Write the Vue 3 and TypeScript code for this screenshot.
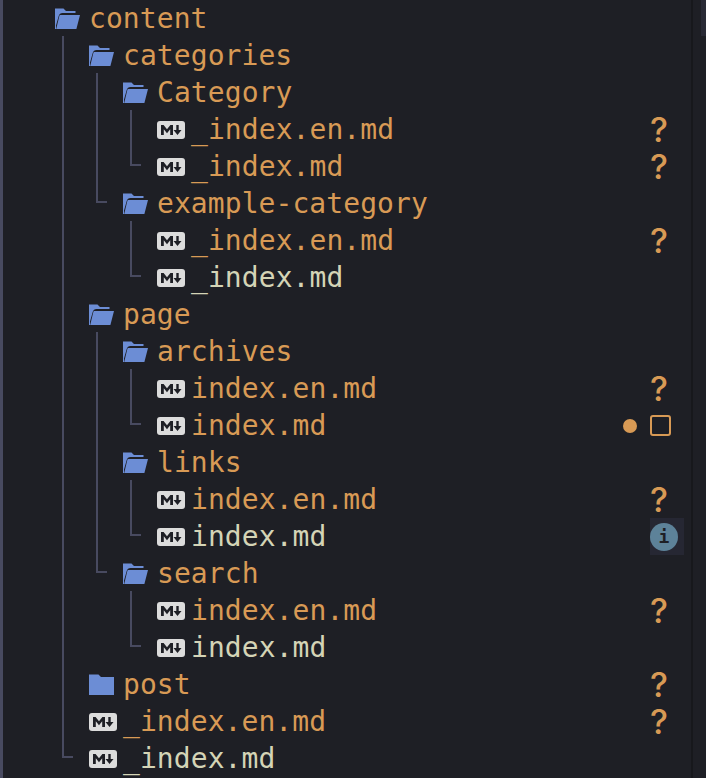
<script setup lang="ts">
type Mark = 'new' | 'stop' | 'info' | null;

interface Node {
  name: string;
  kind: 'open' | 'closed' | 'md';
  changed?: boolean;
  mark?: Mark;
  children?: Node[];
}

const ROW = 37;
const INDENT = 34;

const md = (name: string, changed = true, mark: Mark = 'new'): Node => ({ name, kind: 'md', changed, mark });
const dir = (name: string, children: Node[]): Node => ({ name, kind: 'open', changed: true, children });

const tree: Node[] = [
  dir('content', [
    dir('categories', [
      dir('Category', [md('_index.en.md'), md('_index.md')]),
      dir('example-category', [md('_index.en.md'), md('_index.md', false, null)]),
    ]),
    dir('page', [
      dir('archives', [md('index.en.md'), md('index.md', true, 'stop')]),
      dir('links', [md('index.en.md'), md('index.md', false, 'info')]),
      dir('search', [md('index.en.md'), md('index.md', false, null)]),
    ]),
    { name: 'post', kind: 'closed', changed: true, mark: 'new' },
    md('_index.en.md'),
    md('_index.md', false, null),
  ]),
];

const rows: Array<Node & { depth: number }> = [];
const guides: Array<{ left: number; top: number; height: number }> = [];

function walk(nodes: Node[], depth: number) {
  for (const node of nodes) {
    const at = rows.length;
    rows.push({ ...node, depth });
    if (!node.children) continue;
    let last = at;
    for (const child of node.children) {
      last = rows.length;
      walk([child], depth + 1);
    }
    guides.push({
      left: depth * INDENT + 59,
      top: (at + 1) * ROW - 1,
      height: (last - at) * ROW - 20,
    });
  }
}
walk(tree, 0);
</script>

<template>
  <div class="ide">
    <div class="tree">
      <div
        v-for="(g, i) in guides"
        :key="i"
        class="guide"
        :style="{ left: g.left + 'px', top: g.top + 'px', height: g.height + 'px' }"
      ></div>

      <div
        v-for="(row, i) in rows"
        :key="i"
        class="row"
        :style="{ paddingLeft: 52 + row.depth * INDENT + 'px' }"
      >
        <span class="icon">
          <svg v-if="row.kind === 'open'" width="25" height="21" viewBox="0 0 25 21">
            <path d="M0 .5h8.500l2.500 2.500h9.500v2H7.500q-3 0-3.800 3L1 17.500V21H0z" fill="#6c8dd5" />
            <path d="M5.200 7h19.800l-3.600 14H1.200l3-12.600q.3-1.400 1-1.400z" fill="#6c8dd5" />
          </svg>
          <svg v-else-if="row.kind === 'closed'" width="25" height="21" viewBox="0 0 25 21">
            <path d="M0 .5h9.500l2.500 2.500H25v18H0z" fill="#6c8dd5" />
          </svg>
          <svg v-else class="md" width="28" height="18" viewBox="0 0 28 18">
            <rect width="28" height="18" rx="3" fill="#dcdcdc" />
            <path d="M4 14V4h2.600L10 8.200 13.400 4H16v10h-2.800V8.300L10 12.200 6.800 8.300V14z" fill="#1e1f25" />
            <path d="M19.300 4h2.400v5H24.500l-4 5-4-5h2.800z" fill="#1e1f25" />
          </svg>
        </span>
        <span class="name" :class="{ changed: row.changed }">{{ row.name }}</span>
        <span v-if="row.mark" class="marks">
          <template v-if="row.mark === 'stop'">
            <i class="dot"></i>
            <span class="slot"><i class="square"></i></span>
          </template>
          <span v-else-if="row.mark === 'new'" class="slot question">?</span>
          <span v-else class="slot">
            <span class="info-hover"><span class="info">i</span></span>
          </span>
        </span>
      </div>
    </div>
    <div class="gutter"><div class="thumb"></div></div>
  </div>
</template>

<style scoped>
.ide {
  display: flex;
  width: 706px;
  height: 778px;
  overflow: hidden;
  background: #1e1f25;
  font-family: "DejaVu Sans Mono", "Liberation Mono", monospace;
}

.tree {
  position: relative;
  flex: 1;
  border-left: 3px solid #484a60;
  border-right: 2px solid #17181c;
}

.gutter {
  display: flex;
  justify-content: flex-end;
  width: 13px;
}

.thumb {
  width: 5px;
  height: 36px;
  background: #292a35;
}

.guide {
  position: absolute;
  width: 9px;
  border-left: 2px solid #484a60;
  border-bottom: 2px solid #484a60;
}

.row {
  display: flex;
  align-items: center;
  height: 37px;
  box-sizing: border-box;
}

.icon {
  display: flex;
  width: 34px;
  flex: none;
}

.name {
  flex: 1;
  font-size: 28px;
  letter-spacing: 0.07px;
  color: #d4d4b6;
  white-space: pre;
}

.changed {
  color: #d89a55;
}

.marks {
  display: flex;
  align-items: center;
  gap: 13px;
  color: #d89a55;
}

.slot {
  display: flex;
  align-items: center;
  width: 41px;
}

.question {
  font-family: "Inter", "Liberation Sans", sans-serif;
  font-size: 34px;
  font-weight: 500;
  line-height: 37px;
}

.dot {
  width: 14px;
  height: 14px;
  border-radius: 50%;
  background: #d89a55;
}

.square {
  width: 21px;
  height: 21px;
  box-sizing: border-box;
  border: 2.5px solid #d89a55;
  border-radius: 3px;
}

.info-hover {
  display: flex;
  align-items: center;
  width: 34px;
  height: 37px;
  background: #262733;
}

.info {
  width: 28px;
  height: 28px;
  border-radius: 50%;
  background: #5d8299;
  color: #1e1f25;
  font-size: 18px;
  font-weight: 700;
  line-height: 28px;
  text-align: center;
}
</style>
